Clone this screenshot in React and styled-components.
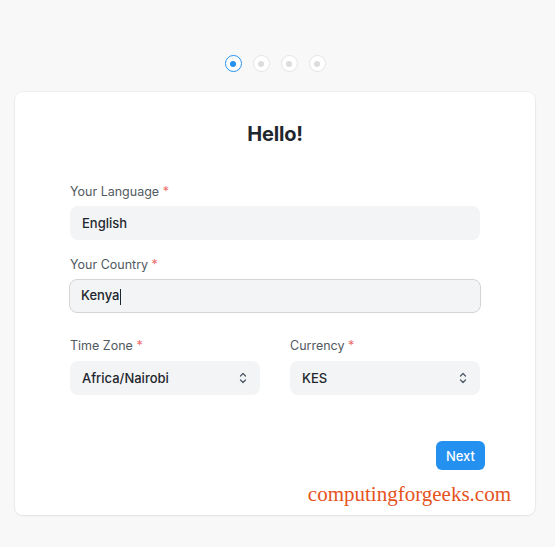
import React from "react";
import styled, { createGlobalStyle } from "styled-components";

const Global = createGlobalStyle`
  html, body { margin: 0; padding: 0; background: #f8f8f8; }
  body { font-family: Inter, "Noto Sans", sans-serif; color: #1f272e; }
  * { box-sizing: border-box; }
`;

const Page = styled.div`
  width: 555px;
  min-height: 547px;
  padding: 55px 20px 0 15px;
  display: flex;
  flex-direction: column;
  align-items: center;
`;

const Steps = styled.div`
  display: flex;
  gap: 11px;
  margin-bottom: 20px;
`;

const Dot = styled.div`
  width: 17px;
  height: 17px;
  border-radius: 50%;
  border: 1px solid ${(p) => (p.$active ? "#2490ef" : "#e4e4e4")};
  background: #fff;
  display: flex;
  align-items: center;
  justify-content: center;
  &::after {
    content: "";
    width: 6px;
    height: 6px;
    border-radius: 50%;
    background: ${(p) => (p.$active ? "#2490ef" : "#dcdcdc")};
  }
`;

const Card = styled.div`
  position: relative;
  width: 520px;
  height: 423px;
  background: #fff;
  border-radius: 8px;
  box-shadow: 0 0 0 1px rgba(0, 0, 0, 0.03), 0 1px 3px rgba(0, 0, 0, 0.06);
  padding: 28px 55px 0 55px;
  display: flex;
  flex-direction: column;
`;

const Title = styled.h1`
  margin: 0;
  text-align: center;
  font-size: 20px;
  line-height: 28px;
  font-weight: 700;
  color: #1f272e;
  letter-spacing: -0.2px;
`;

const Fields = styled.div`
  margin-top: 35px;
  display: flex;
  flex-direction: column;
`;

const Field = styled.div`
  display: flex;
  flex-direction: column;
  gap: ${(p) => p.$gap || 5}px;
  margin-bottom: ${(p) => p.$mb || 0}px;
  flex: 1;
`;

const Label = styled.label`
  font-size: 12.5px;
  line-height: 18px;
  color: #525a62;
  font-weight: 400;
  & span { color: #ec6a6a; }
`;

const Input = styled.div`
  height: 34px;
  border-radius: 8px;
  background: #f3f4f5;
  border: ${(p) => (p.$focus ? "1.5px solid #d2d4d6" : "none")};
  display: flex;
  align-items: center;
  justify-content: space-between;
  padding: 0 ${(p) => (p.$focus ? 11 : 12)}px;
  margin: ${(p) => (p.$focus ? "0 -1px" : "0")};
  font-size: 13px;
  font-weight: 500;
  color: #1f272e;
`;

const Caret = styled.span`
  display: inline-block;
  width: 1px;
  height: 16px;
  background: #1f272e;
  margin-left: 1px;
  vertical-align: middle;
`;

const Row = styled.div`
  display: flex;
  gap: 30px;
`;

const Footer = styled.div`
  margin-top: 46px;
  display: flex;
  justify-content: flex-end;
  margin-right: -5px;
`;

const Button = styled.button`
  height: 29px;
  padding: 0 10px;
  border: none;
  border-radius: 6px;
  background: #2490ef;
  color: #fff;
  font-family: inherit;
  font-size: 13px;
  font-weight: 500;
`;

const Watermark = styled.div`
  position: absolute;
  right: 24px;
  bottom: 8px;
  font-family: "Liberation Serif", serif;
  font-size: 21px;
  color: #e5531d;
`;

const Chevrons = () => (
  <svg width="10" height="14" viewBox="0 0 10 14" fill="none" stroke="#4c5a67" strokeWidth="1.3" strokeLinecap="round" strokeLinejoin="round">
    <path d="M2.5 5 L5 2.5 L7.5 5" />
    <path d="M2.5 9 L5 11.5 L7.5 9" />
  </svg>
);

export default function App() {
  return (
    <>
      <Global />
      <Page>
        <Steps>
          <Dot $active />
          <Dot />
          <Dot />
          <Dot />
        </Steps>
        <Card>
          <Title>Hello!</Title>
          <Fields>
            <Field $mb={16}>
              <Label>Your Language <span>*</span></Label>
              <Input>English</Input>
            </Field>
            <Field $mb={24}>
              <Label>Your Country <span>*</span></Label>
              <Input $focus>
                <span>Kenya<Caret /></span>
              </Input>
            </Field>
            <Row>
              <Field $gap={6}>
                <Label>Time Zone <span>*</span></Label>
                <Input>
                  Africa/Nairobi
                  <Chevrons />
                </Input>
              </Field>
              <Field $gap={6}>
                <Label>Currency <span>*</span></Label>
                <Input>
                  KES
                  <Chevrons />
                </Input>
              </Field>
            </Row>
          </Fields>
          <Footer>
            <Button>Next</Button>
          </Footer>
          <Watermark>computingforgeeks.com</Watermark>
        </Card>
      </Page>
    </>
  );
}
